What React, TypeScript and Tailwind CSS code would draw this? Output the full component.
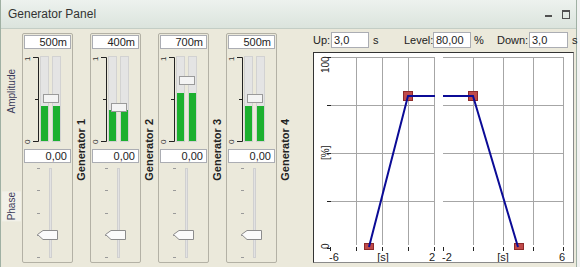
const font = "font-['Liberation_Sans',Arial,sans-serif]";

const gens = [
  { name: "Generator 1", amp: "500m", thumb: 94, green: 107 },
  { name: "Generator 2", amp: "400m", thumb: 103, green: 111 },
  { name: "Generator 3", amp: "700m", thumb: 76, green: 94 },
  { name: "Generator 4", amp: "500m", thumb: 94, green: 107 },
];

function AmpScale() {
  return (
    <svg width="16" height="93" className="shrink-0">
      <text x="6" y="9" fontSize="8" fill="#333" transform="rotate(-90 6 9)">1</text>
      <text x="6" y="92" fontSize="8" fill="#333" transform="rotate(-90 6 92)">0</text>
      <path d="M9 5.5H14.5V89.5H9M11 47.5H14.5" stroke="#222" fill="none" />
    </svg>
  );
}

function Generator({ name, amp, thumb, green }: (typeof gens)[number]) {
  return (
    <div className="flex shrink-0">
      <div className="mt-[4px] flex h-[230px] w-[51px] flex-col rounded-[2px] border border-[#b3b1a5]">
        <div className="mx-[1px] mt-[1px] h-[14px] w-[47px] border border-[#abadb3] bg-white pr-[3px] text-right text-[11px] leading-[12px] text-[#222]">
          {amp}
        </div>
        <div className="mt-[3px] flex h-[93px] pl-[1px]">
          <AmpScale />
          <div className="relative mt-[4px] flex h-[86px] gap-[3px]">
            {[0, 1].map((i) => (
              <div key={i} className="flex h-full w-[9px] flex-col justify-end border border-[#d2d2d2] bg-[#e4e4e4]">
                <div className="w-full bg-[#1cb02f]" style={{ height: 142 - green }} />
              </div>
            ))}
            <div
              className="absolute left-[3px] h-[9px] w-[16px] border border-[#9a9a9a] bg-[#f4f4f4]"
              style={{ top: thumb - 56 }}
            />
          </div>
        </div>
        <div className="mx-[1px] mt-[4px] h-[14px] w-[47px] border border-[#abadb3] bg-white pr-[3px] text-right text-[11px] leading-[12px] text-[#222]">
          0,00
        </div>
        <div className="relative flex pt-[5px]">
          <div className="ml-[14px] flex h-[90px] w-[3px] flex-col justify-between">
            {[0, 1, 2, 3, 4].map((i) => (
              <div key={i} className="h-[1px] w-[3px] bg-[#9a9a9a]" />
            ))}
          </div>
          <div className="ml-[9px] h-[90px] w-[3px] border border-[#d0d0d0] bg-[#e2e2e2]" />
          <svg width="21" height="10" className="absolute left-[14px] top-[67px]">
            <polygon points="0.5,4.5 6,0.5 20.5,0.5 20.5,9.5 6,9.5" fill="#fbfbfb" stroke="#8c8c8c" />
          </svg>
        </div>
      </div>
      <div className="flex w-[17px] items-center justify-center pt-[4px]">
        <span className="rotate-180 text-[11px] font-bold text-[#222] [writing-mode:vertical-rl]">{name}</span>
      </div>
    </div>
  );
}

function Chart() {
  const hy = [57, 105, 153, 201];
  const grid = "#a6a6a6";
  return (
    <svg width="259" height="209" viewBox="314 53 259 209" className="block" fontFamily="Liberation Sans, Arial, sans-serif">
      {hy.map((y) => (
        <g key={y}>
          <line x1="330" x2="434" y1={y + 0.5} y2={y + 0.5} stroke={grid} />
          <line x1="443" x2="563" y1={y + 0.5} y2={y + 0.5} stroke={grid} />
          <line x1="327" x2="331" y1={y + 0.5} y2={y + 0.5} stroke="#222" />
        </g>
      ))}
      <line x1="327" x2="331" y1="248.5" y2="248.5" stroke="#222" />
      {[356, 382, 408, 434].map((x) => (
        <line key={x} x1={x + 0.5} x2={x + 0.5} y1="57" y2="245" stroke={grid} />
      ))}
      {[473, 503, 533, 563].map((x) => (
        <line key={x} x1={x + 0.5} x2={x + 0.5} y1="57" y2="245" stroke={grid} />
      ))}
      {[330, 356, 382, 408, 434, 443, 473, 503, 533, 563].map((x) => (
        <line key={x} x1={x + 0.5} x2={x + 0.5} y1="247" y2="251" stroke="#222" />
      ))}
      <text x="329" y="73" fontSize="10" fill="#222" transform="rotate(-90 329 73)">100</text>
      <text x="329" y="160" fontSize="10" fill="#222" transform="rotate(-90 329 160)">[%]</text>
      <text x="329" y="249" fontSize="10" fill="#222" transform="rotate(-90 329 249)">0</text>
      <g fontSize="11" fill="#222" textAnchor="middle">
        <text x="334" y="261">-6</text>
        <text x="383" y="261">[s]</text>
        <text x="432" y="261">2</text>
        <text x="447" y="261">-2</text>
        <text x="503" y="261">[s]</text>
        <text x="562" y="261">6</text>
      </g>
      <rect x="403.5" y="91.5" width="9" height="9" fill="#c04a4a" stroke="#8e2a2a" />
      <rect x="364.5" y="243.5" width="9" height="6" fill="#c04a4a" stroke="#8e2a2a" />
      <rect x="468.5" y="91.5" width="9" height="9" fill="#c04a4a" stroke="#8e2a2a" />
      <rect x="514.5" y="243.5" width="9" height="6" fill="#c04a4a" stroke="#8e2a2a" />
      <polyline points="369,247 408,96 435,96" fill="none" stroke="#0b0b96" strokeWidth="2" />
      <polyline points="443,96 473,96 518,247" fill="none" stroke="#0b0b96" strokeWidth="2" />
    </svg>
  );
}

export default function App() {
  return (
    <div className={`h-[267px] w-[580px] overflow-hidden bg-[#f2f2f2] ${font}`}>
      <div className="flex h-full w-[577px] flex-col border-x border-[#9fb0a3]">
        <div className="flex h-[29px] shrink-0 items-center border-b border-[#c3cdc5] bg-gradient-to-b from-[#edf2ee] to-[#dbe4dd] pl-[7px] pr-[6px]">
          <span className="text-[12px] text-[#333]">Generator Panel</span>
          <div className="ml-auto flex items-center gap-[10px]">
            <div className="mt-[3px] h-[2px] w-[7px] bg-[#505050]" />
            <div className="h-[9px] w-[8px] border border-t-2 border-[#505050]" />
          </div>
        </div>
        <div className="flex flex-1 bg-[#ebe9db]">
          <div className="flex w-[21px] shrink-0 flex-col items-center">
            <span className="mt-[40px] rotate-180 text-[10px] text-[#3d3d5c] [writing-mode:vertical-rl]">Amplitude</span>
            <span className="mt-[78px] rotate-180 bg-[#f2f1e9] px-[1px] py-[2px] text-[10px] text-[#3d3d5c] [writing-mode:vertical-rl]">Phase</span>
          </div>
          {gens.map((g) => (
            <Generator key={g.name} {...g} />
          ))}
          <div className="flex flex-1 flex-col pl-[19px] pt-[3px] text-[11px] text-[#222]">
            <div className="flex h-[16px] items-center whitespace-nowrap">
              <span className="w-[18px] shrink-0">Up:</span>
              <div className="h-[16px] w-[38px] shrink-0 border border-[#abadb3] bg-white pl-[2px] leading-[14px]">3,0</div>
              <span className="w-[35px] shrink-0 pl-[4px]">s</span>
              <span className="w-[29px] shrink-0">Level:</span>
              <div className="h-[16px] w-[38px] shrink-0 border border-[#abadb3] bg-white pl-[2px] leading-[14px]">80,00</div>
              <span className="w-[26px] shrink-0 pl-[3px]">%</span>
              <span className="w-[32px] shrink-0">Down:</span>
              <div className="h-[16px] w-[39px] shrink-0 border border-[#abadb3] bg-white pl-[2px] leading-[14px]">3,0</div>
              <span className="pl-[4px]">s</span>
            </div>
            <div className="mt-[4px] h-[211px] w-[261px] border border-[#8a8a8a] border-l-[#333] border-t-[#333] bg-white">
              <Chart />
            </div>
          </div>
        </div>
      </div>
    </div>
  );
}
